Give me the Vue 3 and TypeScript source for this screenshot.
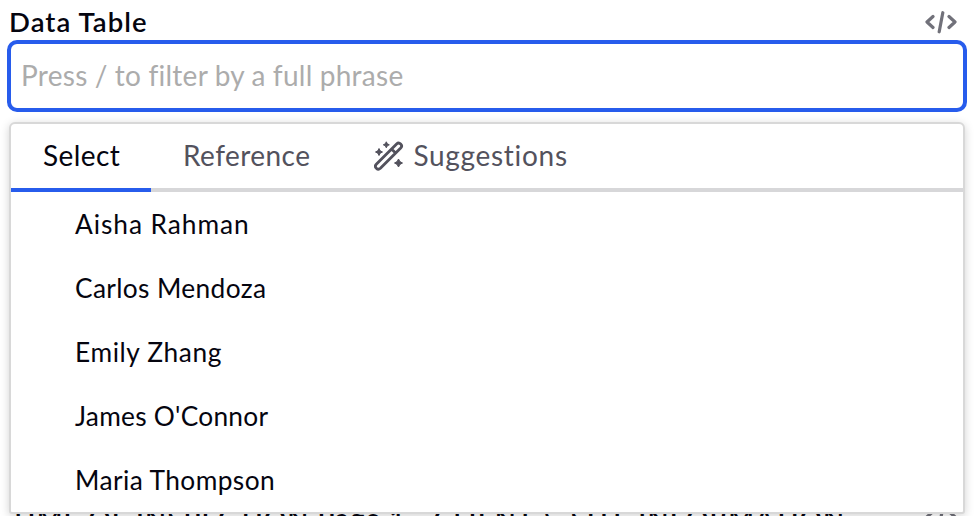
<script setup lang="ts">
import { ref } from 'vue'

interface Option { label: string; spacing: string }

const query = ref('')
const options: Option[] = [
  { label: 'Aisha Rahman', spacing: '0.95px' },
  { label: 'Carlos Mendoza', spacing: '0.36px' },
  { label: 'Emily Zhang', spacing: '0.6px' },
  { label: "James O'Connor", spacing: '0.25px' },
  { label: 'Maria Thompson', spacing: '0.42px' },
]
</script>

<template>
  <main class="form">
    <header class="field-head">
      <label class="title" for="table-input">Data Table</label>
      <svg class="code" viewBox="0 0 32 24" aria-hidden="true">
        <path d="M8 6.500 2 12l6 5.500M24 6.500 30 12l-6 5.500M17.800 2.700 14.200 21.800" />
      </svg>
    </header>
    <input id="table-input" v-model="query" class="field" placeholder="Press / to filter by a full phrase" />
    <section class="menu">
      <nav class="tabs">
        <button class="tab active"><span class="t-select">Select</span></button>
        <button class="tab"><span class="t-reference">Reference</span></button>
        <button class="tab">
          <svg class="wand" viewBox="0 0 30 30" aria-hidden="true">
            <path class="line" d="M2.300 23.200 22.600 2.900a2.900 2.900 0 0 1 4.100 4.100L6.400 27.300a2.900 2.900 0 0 1-4.100-4.100ZM17.500 8l4.100 4.100" />
            <path class="spark" d="m12.300.8 1 2 2 1-2 1-1 2-1-2-2-1 2-1ZM5 7.500l1.200 2.300 2.300 1.200-2.300 1.200L5 14.500l-1.200-2.300L1.500 11l2.300-1.200ZM24.500 18l1.400 2.600 2.600 1.400-2.600 1.400-1.400 2.600-1.400-2.600-2.600-1.400 2.600-1.400Z" />
          </svg>
          <span class="t-suggestions">Suggestions</span>
        </button>
      </nav>
      <ul class="options">
        <li v-for="o in options" :key="o.label"><span :style="{ letterSpacing: o.spacing }">{{ o.label }}</span></li>
      </ul>
    </section>
    <div class="next-field">
      <span class="next-title">TIME OF INSPECTION Page 1 - CLIENT &amp; SITE INFORMATION</span>
      <svg class="code" viewBox="0 0 32 24" aria-hidden="true">
        <path d="M8 6.500 2 12l6 5.500M24 6.500 30 12l-6 5.500M17.800 2.700 14.200 21.800" />
      </svg>
    </div>
  </main>
</template>

<style>
html, body { overflow: hidden; background: #fff; }
</style>

<style scoped>
.form {
  box-sizing: border-box;
  position: relative;
  width: 974px;
  height: 516px;
  padding: 4px 8px 0;
  overflow: hidden;
  background: #fff;
  color: #05050f;
  font-family: Lato, "Noto Sans", sans-serif;
}
.field-head { display: flex; justify-content: space-between; height: 37px; padding: 0 9px 0 1px; }
.title { font-size: 27.500px; font-weight: 600; line-height: 35px; letter-spacing: 1.080px; }
.code { width: 32px; height: 24px; margin-top: 6px; fill: none; stroke: #71717a; stroke-width: 3.200; stroke-linecap: round; stroke-linejoin: round; }
.field {
  display: block;
  box-sizing: border-box;
  width: 960px;
  height: 72px;
  margin: -1px 0 0 -1px;
  padding: 0 10px 3px;
  border: 4px solid #275cec;
  border-radius: 10px;
  outline: 0;
  background: #fff;
  font: 28px Lato, sans-serif;
  letter-spacing: .280px;
  word-spacing: -.300px;
}
.field::placeholder { color: #acacac; opacity: 1; }
.menu {
  position: absolute;
  z-index: 2;
  top: 122px;
  left: 9px;
  box-sizing: border-box;
  width: 956px;
  height: 392px;
  border: 2px solid #d8d8d8;
  border-radius: 6px 6px 3px 3px;
  background: #fff;
  box-shadow: 0 2px 10px rgba(0, 0, 0, .18);
}
.tabs { display: flex; height: 64px; border-bottom: 4px solid #d7d7d9; }
.tab { display: flex; align-items: center; gap: 9px; height: 68px; padding: 0 32px 4px; border: 0; background: none; color: #53525d; font: 28px Lato, sans-serif; }
.tab span { padding-bottom: 3px; white-space: nowrap; }
.tab.active { box-sizing: border-box; width: 140px; border-bottom: 4px solid #275cec; padding-bottom: 0; color: #05050f; }
.t-select { letter-spacing: .400px; }
.t-reference { letter-spacing: .450px; }
.t-suggestions { letter-spacing: .700px; }
.wand { width: 30px; height: 30px; }
.line { fill: none; stroke: #53525d; stroke-width: 2.800; stroke-linejoin: round; }
.spark { fill: #53525d; stroke: #53525d; stroke-linejoin: round; }
.options { margin: 0; padding: 0; list-style: none; }
.options li { height: 64px; padding-left: 64px; font-size: 26.300px; line-height: 64px; }
.next-field { position: absolute; top: 499px; left: 10px; width: 947px; display: flex; justify-content: space-between; }
.next-title { font-size: 27.500px; font-weight: 600; line-height: 37px; letter-spacing: 1.160px; white-space: nowrap; }
</style>
